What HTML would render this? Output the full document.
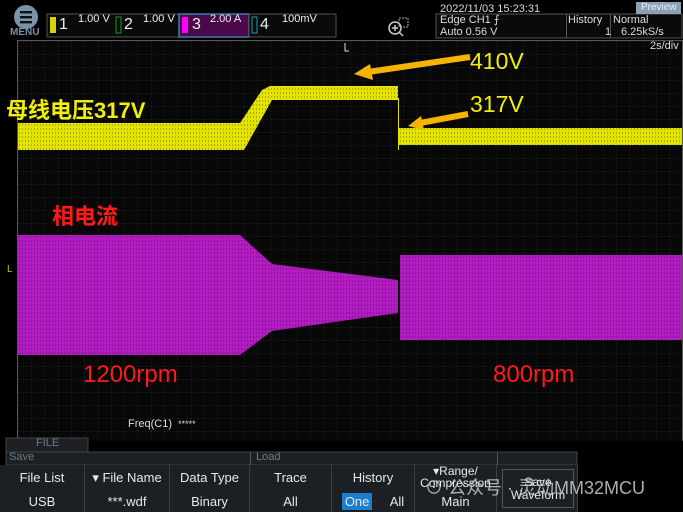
<!DOCTYPE html>
<html><head><meta charset="utf-8"><style>
body{margin:0;width:683px;height:512px;background:#000;overflow:hidden;position:relative;font-family:"Liberation Sans","Noto Sans CJK SC",sans-serif;}
.a{position:absolute;white-space:nowrap}
.m{font-family:"Liberation Sans Narrow","Liberation Sans",sans-serif;}
.btn{position:absolute;top:465px;height:47px;background:#1c2024;border-right:1px solid #3a3f44;color:#e8e8e8;font-size:13px;text-align:center;}
.btn .t{position:absolute;top:5px;left:0;right:0}
.btn .b{position:absolute;top:29px;left:0;right:0}
</style></head><body>
<svg class="a" style="left:0;top:0" width="683" height="512">
<defs>
<pattern id="g" width="13.3" height="13" patternUnits="userSpaceOnUse" x="18" y="41">
<path d="M0 0V13M0 0H13.3" stroke="#363636" stroke-width="1" stroke-dasharray="1 1.5" fill="none"/>
</pattern>
<pattern id="ns" width="3" height="4" patternUnits="userSpaceOnUse">
<rect width="3" height="4" fill="none"/><rect x="1" y="0" width="1" height="2" fill="#000" opacity=".25"/>
</pattern>
</defs>
<rect x="18" y="41" width="664" height="400" fill="#070707"/>
<rect x="18" y="41" width="664" height="400" fill="url(#g)"/>
<line x1="17.5" y1="41" x2="17.5" y2="441" stroke="#555"/>
<line x1="682.5" y1="41" x2="682.5" y2="441" stroke="#555"/>
<line x1="17" y1="40.5" x2="683" y2="40.5" stroke="#555"/>
<!-- yellow -->
<path d="M18 123H240L262 90L270 86H398V98H399V150H398V100L272 100L244 150H18Z" fill="#e4e400"/>
<path d="M399 128H682V145H399Z" fill="#e4e400"/>
<path d="M18 123H240L262 90L270 86H398V100L272 100L244 150H18Z" fill="url(#ns)"/>
<path d="M399 128H682V145H399Z" fill="url(#ns)"/>
<!-- magenta -->
<path d="M18 235H240L272 264L398 280V313L272 331L240 355H18Z" fill="#b21cc2"/>
<path d="M400 255H682V340H400Z" fill="#b21cc2"/>
<path d="M18 235H240L272 264L398 280V313L272 331L240 355H18Z" fill="url(#ns)"/>
<path d="M400 255H682V340H400Z" fill="url(#ns)"/>
<!-- arrows -->
<line x1="470" y1="57" x2="368" y2="72" stroke="#f5b400" stroke-width="6"/>
<path d="M354 74L370 64L373 80Z" fill="#f5b400"/>
<line x1="468" y1="114" x2="420" y2="123" stroke="#f5b400" stroke-width="6"/>
<path d="M408 126L421 116L424 130Z" fill="#f5b400"/>
<!-- menu -->
<circle cx="26" cy="17" r="12" fill="#7a93a8"/>
<rect x="20" y="11" width="12" height="2.4" fill="#111"/><rect x="20" y="16" width="12" height="2.4" fill="#111"/><rect x="20" y="21" width="12" height="2.4" fill="#111"/>
<rect x="47" y="14" width="189" height="23" fill="#0a0a0a" stroke="#555"/>
<rect x="179" y="14" width="70" height="23" fill="#4a0a4a" stroke="#3a7fb0" stroke-width="1.5"/>
<rect x="249" y="14" width="87" height="23" fill="#0a0a0a" stroke="#555"/>
<rect x="50" y="17" width="6" height="16" fill="#d4d400"/>
<rect x="116" y="17" width="5" height="16" fill="none" stroke="#1a9a1a"/>
<rect x="182" y="17" width="6" height="16" fill="#ff00ff"/>
<rect x="252" y="17" width="5" height="16" fill="none" stroke="#1aa0a0"/>
<rect x="436" y="14" width="246" height="24" fill="#0a0a0a" stroke="#555"/>
<line x1="566.5" y1="14" x2="566.5" y2="38" stroke="#555"/>
<line x1="610.5" y1="14" x2="610.5" y2="38" stroke="#555"/>
<rect x="636" y="2" width="45" height="12" fill="#8aa2b6"/>
<circle cx="395" cy="28" r="6" fill="none" stroke="#ccc" stroke-width="1.5"/><path d="M392 28h6M395 25v6M399 32l4 4" stroke="#ccc" stroke-width="1.5"/>
<rect x="399" y="18" width="9" height="9" fill="none" stroke="#aaa" stroke-dasharray="2 1"/>
<path d="M345 43v8h4" stroke="#ddd" fill="none"/>
<!-- bottom -->
<rect x="6" y="438" width="82" height="14" fill="#1c2024" stroke="#444"/>
<rect x="6" y="452" width="571" height="13" fill="#1c2024" stroke="#444"/>
<line x1="250.5" y1="452" x2="250.5" y2="465" stroke="#555"/>
<line x1="497.5" y1="452" x2="497.5" y2="465" stroke="#555"/>
<rect x="0" y="465" width="577" height="47" fill="#1c2024"/>
</svg>
<div class="a" style="left:10px;top:27px;font-size:10px;font-weight:bold;color:#7a93a8">MENU</div>
<div class="a m" style="left:59px;top:16px;color:#eee;font-size:16px">1</div>
<div class="a m" style="left:78px;top:13px;color:#eee;font-size:11px">1.00 V</div>
<div class="a m" style="left:124px;top:16px;color:#eee;font-size:16px">2</div>
<div class="a m" style="left:143px;top:13px;color:#eee;font-size:11px">1.00 V</div>
<div class="a m" style="left:192px;top:16px;color:#eee;font-size:16px">3</div>
<div class="a m" style="left:210px;top:13px;color:#eee;font-size:11px">2.00 A</div>
<div class="a m" style="left:260px;top:16px;color:#eee;font-size:16px">4</div>
<div class="a m" style="left:282px;top:13px;color:#eee;font-size:11px">100mV</div>
<div class="a m" style="left:440px;top:3px;color:#ddd;font-size:11px">2022/11/03 15:23:31</div>
<div class="a m" style="left:440px;top:14px;color:#ddd;font-size:11px;line-height:12px">Edge CH1 ⨍<br>Auto 0.56 V</div>
<div class="a m" style="left:568px;top:14px;color:#ddd;font-size:11px;line-height:12px">History<br><span style="padding-left:37px">1</span></div>
<div class="a m" style="left:613px;top:14px;color:#ddd;font-size:11px;line-height:12px">Normal<br><span style="padding-left:8px">6.25kS/s</span></div>
<div class="a m" style="left:641px;top:2px;color:#eee;font-size:10px">Preview</div>
<div class="a m" style="left:650px;top:40px;color:#ddd;font-size:11px">2s/div</div>
<div class="a" style="left:470px;top:48px;color:#f0f000;font-size:23px">410V</div>
<div class="a" style="left:470px;top:91px;color:#f0f000;font-size:23px">317V</div>
<div class="a" style="left:6px;top:93px;color:#f0f000;font-size:22px;font-weight:bold">母线电压317V</div>
<div class="a" style="left:52px;top:199px;color:#ff1a1a;font-size:22px;font-weight:bold">相电流</div>
<div class="a" style="left:83px;top:361px;color:#ff1a1a;font-size:24px">1200rpm</div>
<div class="a" style="left:493px;top:361px;color:#ff1a1a;font-size:24px">800rpm</div>
<div class="a" style="left:128px;top:418px;color:#ddd;font-size:11px">Freq(C1) &nbsp;<span style="font-size:9px">*****</span></div>
<div class="a" style="left:7px;top:264px;color:#c8c800;font-size:10px">L</div>
<div class="a m" style="left:36px;top:437px;color:#6c7a88;font-size:11px">FILE</div>
<div class="a m" style="left:9px;top:451px;color:#6c7a88;font-size:11px">Save</div>
<div class="a m" style="left:256px;top:451px;color:#6c7a88;font-size:11px">Load</div>
<div class="btn" style="left:0;width:84px"><div class="t">File List</div><div class="b">USB</div></div>
<div class="btn" style="left:85px;width:84px"><div class="t">▾ File Name</div><div class="b">***.wdf</div></div>
<div class="btn" style="left:170px;width:79px"><div class="t">Data Type</div><div class="b">Binary</div></div>
<div class="btn" style="left:250px;width:81px"><div class="t">Trace</div><div class="b">All</div></div>
<div class="btn" style="left:332px;width:82px"><div class="t">History</div><div class="b"><span style="background:#1a7fd0;padding:1px 3px">One</span> &nbsp;&nbsp;&nbsp; All</div></div>
<div class="btn" style="left:415px;width:81px"><div class="t" style="top:0;font-size:12px;line-height:12px">▾Range/<br>Compression</div><div class="b">Main</div></div>
<div class="btn" style="left:497px;width:80px"><div style="position:absolute;left:5px;top:4px;right:3px;bottom:4px;border:1px solid #555;font-size:12px;line-height:13px;padding-top:6px">Save<br>Waveform</div></div>
<div class="a" style="left:425px;top:474px;color:#ccc;font-size:18px;opacity:.85">⊙ 公众号 · 灵动MM32MCU</div>
</body></html>
